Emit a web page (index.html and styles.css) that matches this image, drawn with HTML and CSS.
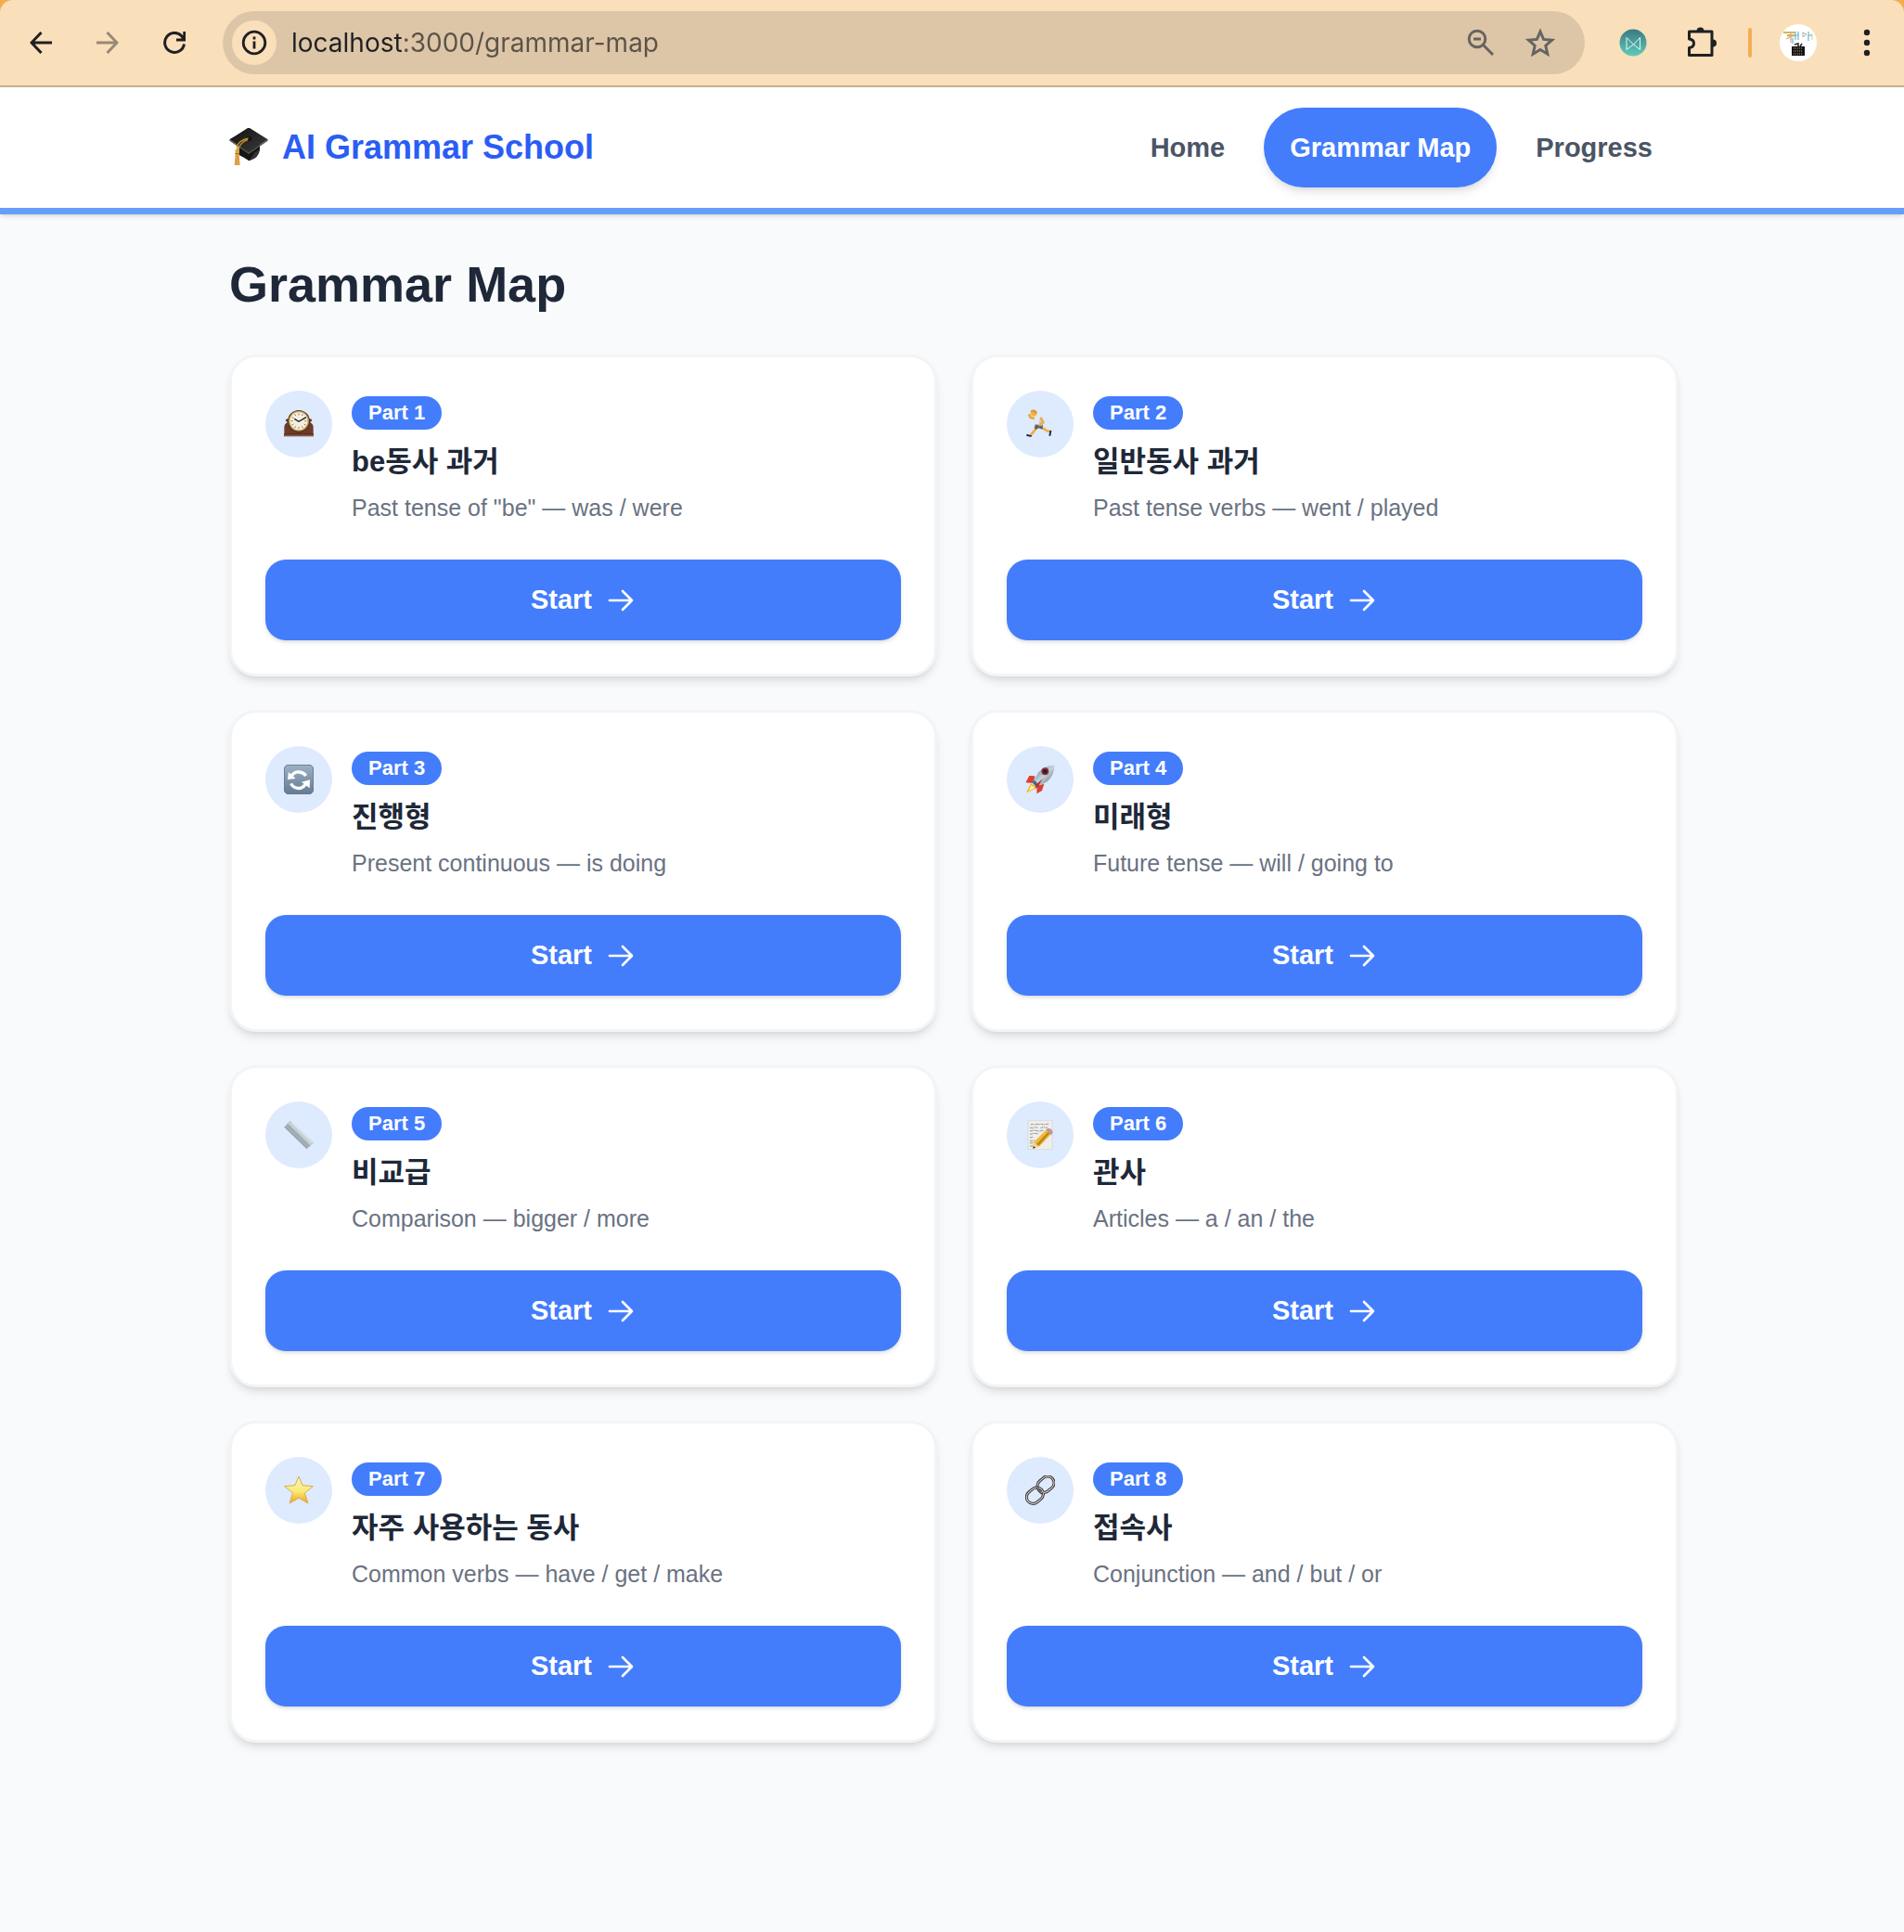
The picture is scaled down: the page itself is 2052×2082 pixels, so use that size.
FILE: index.html
```html
<!DOCTYPE html>
<html lang="ko">
<head>
    <meta charset="UTF-8">
    <meta name="viewport" content="width=device-width, initial-scale=1.0">
    <title>AI Grammar School</title>
    <link rel="stylesheet" href="styles.css">
</head>
<body>
    <svg class="defs" aria-hidden="true">
        <symbol id="arrow" viewBox="0 0 24 24">
            <path d="M13.5 4.5L21 12l-7.5 7.5M21 12H3" fill="none" stroke="currentColor" stroke-width="2" stroke-linecap="round" stroke-linejoin="round"/>
        </symbol>
    </svg>

    <!-- Browser toolbar -->
    <div class="browser">
        <div class="toolbar">
            <button class="tool-btn" aria-label="Back">
                <svg width="24" height="24" viewBox="0 0 24 24" fill="none" stroke="#1f2023" stroke-width="3"><path d="M12.5 1L2 12l10.500 11M2 12h22"/></svg>
            </button>
            <button class="tool-btn" aria-label="Forward">
                <svg width="24" height="24" viewBox="0 0 24 24" fill="none" stroke="#988876" stroke-width="3"><path d="M11.5 1L22 12 11.5 23M22 12H0"/></svg>
            </button>
            <button class="tool-btn" aria-label="Reload">
                <svg width="24" height="24" viewBox="0 0 24 24" fill="none" stroke="#1f2023" stroke-width="3"><path d="M22.5 13.5A10.5 10.5 0 1 1 20 5l2 3.5M22.8 0v9H14"/></svg>
            </button>
            <div class="omnibox">
                <button class="site-info" aria-label="Site information">
                    <svg width="28" height="28" viewBox="0 0 28 28" fill="none" stroke="#1f2023" stroke-width="2.8"><circle cx="14" cy="14" r="11.8"/><path d="M14 12.5v8M14 7.500v3"/></svg>
                </button>
                <input class="url" type="text" value="localhost:3000/grammar-map" aria-label="Address">
                <button class="tool-btn" aria-label="Zoom">
                    <svg width="30" height="30" viewBox="0 0 30 30" fill="none" stroke="#666462" stroke-width="3"><circle cx="11" cy="11" r="8.8"/><path d="M7 11h8M17.500 17.500L28 28"/></svg>
                </button>
                <button class="tool-btn" aria-label="Bookmark">
                    <svg width="32" height="32" viewBox="0 0 32 32" fill="none" stroke="#666462" stroke-width="3"><path d="M16 4l3.600 8.400 9 .8-6.800 6 2 9L16 23.500 8.200 28.200l2-9-6.800-6 9-.8z"/></svg>
                </button>
            </div>
            <div class="tool-actions">
                <button class="tool-btn" aria-label="Extension">
                    <svg width="30" height="30" viewBox="0 0 30 30">
                        <defs><linearGradient id="teal" x2="0" y2="1"><stop offset="0" stop-color="#397983"/><stop offset="1" stop-color="#61ccba"/></linearGradient></defs>
                        <circle cx="15" cy="15" r="14.5" fill="url(#teal)"/>
                        <path d="M8 9.500v13l7.500-5.500 7 5.500v-13L15.500 17z" fill="none" stroke="#e5fbf5"/>
                    </svg>
                </button>
                <button class="tool-btn" aria-label="Extensions">
                    <svg width="34" height="34" viewBox="0 0 34 34">
                        <path d="M3.500 5h24.500v25.500H3.500v-8c3.500-.5 5-2 5-4.800s-1.500-4.200-5-4.700z" fill="none" stroke="#1f2023" stroke-width="3" stroke-linejoin="round"/>
                        <path d="M11.500 4.500a4 4 0 0 1 8 0zM29 13.500a4 4 0 0 1 0 8z" fill="#1f2023"/>
                    </svg>
                </button>
                <span class="divider"></span>
                <button class="tool-btn" aria-label="Profile">
                    <svg width="40" height="40" viewBox="0 0 40 40">
                        <circle cx="20" cy="20" r="20" fill="#fff"/>
                        <path d="M4 9h13M8 12h9" stroke="#d2b85b" stroke-width="2"/>
                        <path d="M8 13h9M12 10v7M7 16l5-2" stroke="#e39b72"/>
                        <path d="M17 8v9M20 8v9M14 15v6M17 12h4M31 8v10M31 12h4" stroke="#8fc6d8" stroke-width="1.600"/>
                        <path d="M25 9l4 2-4 3zM12 20v-4" fill="none" stroke="#aaa"/>
                        <path d="M35 10v7" stroke="#d7cb74"/>
                        <path d="M13 24h14v10H13z" fill="#17120f"/>
                        <path d="M15 26h10M15 29h10M15 32h10" stroke="#aaa" stroke-dasharray="1 1"/>
                        <path d="M16 22l4-1v3M22 24l2-3" fill="none" stroke="#222" stroke-width="1.500"/>
                    </svg>
                </button>
                <button class="tool-btn" aria-label="Menu">
                    <svg width="8" height="30" viewBox="0 0 8 30" fill="#1f2023"><circle cx="4" cy="4" r="3.200"/><circle cx="4" cy="15" r="3.200"/><circle cx="4" cy="26" r="3.200"/></svg>
                </button>
            </div>
        </div>
    </div>

    <header class="header">
        <div class="container header-inner">
            <a class="logo" href="#">
                <svg width="42" height="42" viewBox="0 3 126 126" aria-hidden="true">
                    <defs><linearGradient id="cap" x2="1" y2="1"><stop offset="0" stop-color="#111"/><stop offset="1" stop-color="#3c3c3c"/></linearGradient></defs>
                    <path d="M32 62v28q12 6 32 19 32-8 35-36V52z" fill="#151515"/>
                    <path d="M82 83l16-10q-2 22-33 35z" fill="#353535"/>
                    <path d="M63 1l62 39-62 42L1 40z" fill="url(#cap)"/>
                    <path d="M1 40l62 42 62-42v4L63 87 1 44z" fill="#555"/>
                    <ellipse cx="64" cy="37" rx="9" ry="7" fill="#111"/>
                    <path d="M62 36Q30 44 26 62v22M60 41Q32 50 29 80" fill="none" stroke="#c8902c" stroke-width="4"/>
                    <path d="M20 72h12v16l3 35H17l3-35z" fill="#dda044"/>
                    <path d="M19 86h14" stroke="#a76c20" stroke-width="3"/>
                </svg>
                <span>AI Grammar School</span>
            </a>
            <nav class="nav">
                <a href="#">Home</a>
                <a class="active" href="#">Grammar Map</a>
                <a href="#">Progress</a>
            </nav>
        </div>
    </header>

    <main class="container main">
        <h1>Grammar Map</h1>
        <div class="grid">
            <article class="card">
                <div class="card-head">
                    <div class="icon">
                        <svg viewBox="0 0 96 96">
                            <path d="M6 38q-2-7 8-7h68q10 0 8 7l-6 4q11 6 11 16v26H1V58q0-10 11-16z" fill="#6d3c2c"/>
                            <path d="M0 81h96v7H0z" fill="#8b5743"/><path d="M0 79h96v3H0z" fill="#4b241b"/>
                            <circle cx="48" cy="39" r="36" fill="#4d2d1d"/><circle cx="48" cy="38" r="33" fill="#c09a4b"/><circle cx="48" cy="38" r="29" fill="#f3eee0"/>
                            <path d="M48 13v6M48 57v6M23 38h6M67 38h6M35 16l3 5M58 55l3 5M26 26l5 3M26 51l5-3M70 51l-5-3M35 60l3-5M61 16l-3 5" stroke="#827b6d" stroke-width="3"/>
                            <path d="M34 31l14 9 24-14" fill="none" stroke="#211b17" stroke-width="4"/>
                        </svg>
                    </div>
                    <div class="info">
                        <span class="badge">Part 1</span>
                        <h2>be동사 과거</h2>
                        <p>Past tense of "be" — was / were</p>
                    </div>
                </div>
                <button class="start">Start <svg><use href="#arrow"/></svg></button>
            </article>

            <article class="card">
                <div class="card-head">
                    <div class="icon">
                        <svg viewBox="0 0 96 96">
                            <path d="M31 30L17 27l-4-8" fill="none" stroke="#eba83b" stroke-width="8" stroke-linecap="round"/>
                            <path d="M40 52L31 68 17 84M51 58l20 12 12 2" fill="none" stroke="#efac43" stroke-width="8" stroke-linejoin="round"/>
                            <path d="M5 80l16 5-2 5-16-4zM79 69h6l-3 17h-6z" fill="#29264d"/>
                            <path d="M33 47l24 3-2 15-12-4-8 5-6-5z" fill="#626168"/>
                            <path d="M29 23l12-3 15 9-2 24-23-4z" fill="#e6e9ee"/><path d="M48 24l8 5-3 24-9-2z" fill="#c2c8d0"/>
                            <path d="M51 29l8 14-13 8" fill="none" stroke="#efac43" stroke-width="7" stroke-linecap="round" stroke-linejoin="round"/>
                            <circle cx="27" cy="13" r="10" fill="#f1b346"/><path d="M16 8q3-8 13-6 11 2 8 13l-5 1-4-7z" fill="#d59d30"/>
                        </svg>
                    </div>
                    <div class="info">
                        <span class="badge">Part 2</span>
                        <h2>일반동사 과거</h2>
                        <p>Past tense verbs — went / played</p>
                    </div>
                </div>
                <button class="start">Start <svg><use href="#arrow"/></svg></button>
            </article>

            <article class="card">
                <div class="card-head">
                    <div class="icon">
                        <svg viewBox="0 0 96 96">
                            <defs><linearGradient id="tile" x2="0" y2="1"><stop offset="0" stop-color="#9eb2c5"/><stop offset="1" stop-color="#647b94"/></linearGradient></defs>
                            <rect x="1" y="1" width="94" height="94" rx="14" fill="url(#tile)" stroke="#60758a" stroke-width="3"/>
                            <path d="M23 39q10-17 27-15 14 1 21 12M73 57Q63 79 44 76q-15-2-21-15" fill="none" stroke="#fff" stroke-width="10"/>
                            <path d="M15 24l-3 24 26-3zM83 76l1-27-27 7z" fill="#fff"/>
                        </svg>
                    </div>
                    <div class="info">
                        <span class="badge">Part 3</span>
                        <h2>진행형</h2>
                        <p>Present continuous — is doing</p>
                    </div>
                </div>
                <button class="start">Start <svg><use href="#arrow"/></svg></button>
            </article>

            <article class="card">
                <div class="card-head">
                    <div class="icon">
                        <svg viewBox="0 0 96 96">
                            <defs><linearGradient id="hull" x2="1" y2="1"><stop offset="0" stop-color="#3f6d9c"/><stop offset=".5" stop-color="#c3d3de"/><stop offset="1" stop-color="#555b63"/></linearGradient></defs>
                            <path d="M18 61L3 91l37-16z" fill="#efb42a"/><path d="M19 67l-8 18 21-10z" fill="#fff39b"/>
                            <path d="M31 37L13 36 1 58l26 2zM61 62L54 84 37 94l1-26z" fill="#db3f2d"/>
                            <path d="M94 2Q66 1 43 24L22 59l15 14 35-19Q95 31 94 2z" fill="url(#hull)"/>
                            <path d="M22 57l8-6 17 17-10 6z" fill="#426887"/>
                            <circle cx="64" cy="22" r="12" fill="#9d2928"/><circle cx="64" cy="22" r="7" fill="#162737"/>
                            <path d="M56 46L36 64l-4 14 11-10z" fill="#c92b27"/>
                        </svg>
                    </div>
                    <div class="info">
                        <span class="badge">Part 4</span>
                        <h2>미래형</h2>
                        <p>Future tense — will / going to</p>
                    </div>
                </div>
                <button class="start">Start <svg><use href="#arrow"/></svg></button>
            </article>

            <article class="card">
                <div class="card-head">
                    <div class="icon">
                        <svg viewBox="0 0 96 96">
                            <path d="M20 2L1 23l73 71 21-21z" fill="#a2adb6"/>
                            <path d="M20 2l-9 10 74 72 10-11z" fill="#c4ced5"/>
                            <path d="M11 12l74 72" stroke="#89949d" stroke-width="2"/>
                            <path d="M3 22l72 71" stroke="#747f88" stroke-width="3" stroke-dasharray="2 3"/>
                            <path d="M24 7l67 66" stroke="#dce4e9" stroke-width="4"/>
                        </svg>
                    </div>
                    <div class="info">
                        <span class="badge">Part 5</span>
                        <h2>비교급</h2>
                        <p>Comparison — bigger / more</p>
                    </div>
                </div>
                <button class="start">Start <svg><use href="#arrow"/></svg></button>
            </article>

            <article class="card">
                <div class="card-head">
                    <div class="icon">
                        <svg viewBox="0 0 96 96">
                            <path d="M9 1h78v94H9z" fill="#eeeeeb" stroke="#d2d2ce" stroke-width="2"/>
                            <path d="M17 15l7-2 5 2 7-2 6 1 9-1 8 2 18-3M15 25l10 1 7-3 10 2M49 26l9-3 14 2M15 36l14-3 15 3 16-3M15 46l16-3 12 2M15 57l11-2M15 68l18-2M15 75l14-2M15 85l10-2" fill="none" stroke="#666" stroke-width="2" stroke-dasharray="9 2 4 2"/>
                            <path d="M27 72l-2 20 21-7 38-40-15-15z" fill="#efbd35"/><path d="M36 78l38-40 5 5-37 42z" fill="#c38321"/>
                            <path d="M27 72l-2 20 20-6z" fill="#ecd4a2"/><path d="M26 84l-1 8 8-3z" fill="#292622"/>
                            <path d="M67 32l5-5 16 16-5 5z" fill="#9da7ac"/><path d="M71 28q10-3 15 5t1 11z" fill="#e7818b"/>
                        </svg>
                    </div>
                    <div class="info">
                        <span class="badge">Part 6</span>
                        <h2>관사</h2>
                        <p>Articles — a / an / the</p>
                    </div>
                </div>
                <button class="start">Start <svg><use href="#arrow"/></svg></button>
            </article>

            <article class="card">
                <div class="card-head">
                    <div class="icon">
                        <svg viewBox="0 0 96 96">
                            <defs><linearGradient id="gold" x2="0" y2="1"><stop offset="0" stop-color="#fff5bd"/><stop offset=".55" stop-color="#fbec75"/><stop offset="1" stop-color="#eba31d"/></linearGradient></defs>
                            <path d="M48 3l12 29 34 3-27 22 11 33-30-17-30 17 11-33L2 35l34-3z" fill="url(#gold)" stroke="#dcab50" stroke-width="3" stroke-linejoin="round"/>
                        </svg>
                    </div>
                    <div class="info">
                        <span class="badge">Part 7</span>
                        <h2>자주 사용하는 동사</h2>
                        <p>Common verbs — have / get / make</p>
                    </div>
                </div>
                <button class="start">Start <svg><use href="#arrow"/></svg></button>
            </article>

            <article class="card">
                <div class="card-head">
                    <div class="icon">
                        <svg viewBox="0 0 96 96" fill="none">
                            <g stroke="#3b3030" stroke-width="9"><rect x="37" y="8" width="58" height="42" rx="21" transform="rotate(-40 66 29)"/><rect x="2" y="44" width="58" height="42" rx="21" transform="rotate(-40 31 65)"/></g>
                            <g stroke="#d9dedf" stroke-width="3"><rect x="37" y="8" width="58" height="42" rx="21" transform="rotate(-40 66 29)"/><rect x="2" y="44" width="58" height="42" rx="21" transform="rotate(-40 31 65)"/></g>
                            <path d="M38 34q4 20 19 25" stroke="#3b3030" stroke-width="7"/><path d="M38 34q4 18 17 23" stroke="#a6a6a7" stroke-width="3"/>
                        </svg>
                    </div>
                    <div class="info">
                        <span class="badge">Part 8</span>
                        <h2>접속사</h2>
                        <p>Conjunction — and / but / or</p>
                    </div>
                </div>
                <button class="start">Start <svg><use href="#arrow"/></svg></button>
            </article>
        </div>
    </main>
</body>
</html>
```

FILE: styles.css
```css
* {
    box-sizing: border-box;
}
body {
    margin: 0;
    font-family: "Liberation Sans", "Noto Sans CJK KR", sans-serif;
    background-color: #f9fafc;
    color: #1e2838;
}
h1, h2, p {
    margin: 0;
}
a {
    text-decoration: none;
}
button {
    border: none;
    padding: 0;
    font-family: inherit;
    cursor: pointer;
}
.defs {
    display: none;
}

/* browser toolbar */
.browser {
    background-color: #f4ac50;
}
.toolbar {
    display: flex;
    align-items: center;
    gap: 24px;
    padding: 12px 16px 12px 20px;
    background-color: #fadfbb;
    border-bottom: 2px solid #c8b195;
    border-radius: 14px 14px 0 0;
}
.tool-btn, .site-info {
    display: flex;
    align-items: center;
    justify-content: center;
    flex-shrink: 0;
    width: 48px;
    height: 48px;
    background: none;
}
.omnibox {
    display: flex;
    align-items: center;
    flex: 1;
    gap: 16px;
    height: 68px;
    margin-left: 4px;
    padding: 0 24px 0 10px;
    border-radius: 34px;
    background-color: #ddc6a7;
}
.site-info {
    border-radius: 50%;
    background-color: #fadfbb;
}
.url {
    flex: 1;
    min-width: 0;
    height: 48px;
    padding: 0;
    border: none;
    outline: none;
    font-family: Inter, sans-serif;
    font-size: 28px;
    color: transparent;
    background: linear-gradient(to right, #1f2023 121px, #5b5248 121px);
    background-clip: text;
    -webkit-background-clip: text;
    caret-color: #1f2023;
}
.tool-actions {
    display: flex;
    align-items: center;
    gap: 26px;
    margin-left: 4px;
}
.divider {
    width: 4px;
    height: 32px;
    border-radius: 2px;
    background-color: #f4ae54;
}

/* site header */
.container {
    max-width: 1566px;
    margin: 0 auto;
    padding-left: 4px;
}
.header {
    background-color: #fff;
    border-bottom: 7px solid #659ffb;
    box-shadow: 0 2px 5px rgba(0,0,0,0.1), 0 2px 4px -2px rgba(0,0,0,0.1);
}
.header-inner {
    display: flex;
    align-items: center;
    justify-content: space-between;
    height: 130px;
}
.logo {
    display: flex;
    align-items: center;
    gap: 15px;
    font-size: 36px;
    font-weight: bold;
    color: #2b5df5;
}
.nav {
    display: flex;
    gap: 14px;
}
.nav a {
    padding: 0 28px;
    border-radius: 43px;
    font-size: 29px;
    font-weight: bold;
    line-height: 86px;
    color: #4a5565;
}
.nav .active {
    color: #fff;
    background-color: #437dfc;
    box-shadow: 0 7px 11px -2px rgba(0,0,0,0.1), 0 4px 7px -4px rgba(0,0,0,0.1);
}

/* lesson cards */
.main {
    padding-top: 43px;
    padding-bottom: 43px;
}
h1 {
    margin-bottom: 43px;
    font-size: 54px;
    line-height: 65px;
}
.grid {
    display: grid;
    grid-template-columns: 1fr 1fr;
    gap: 36px;
}
.card {
    padding: 36px;
    border: 3px solid #f3f4f6;
    border-radius: 29px;
    background-color: #fff;
    box-shadow: 0 7px 11px -2px rgba(0,0,0,0.1), 0 4px 7px -4px rgba(0,0,0,0.1);
}
.card-head {
    display: flex;
    align-items: flex-start;
    gap: 21px;
    margin-bottom: 38px;
}
.icon {
    display: flex;
    align-items: center;
    justify-content: center;
    width: 72px;
    height: 72px;
    border-radius: 50%;
    background-color: #deeafe;
}
.icon svg {
    width: 32px;
    height: 32px;
}
.info {
    display: flex;
    flex-direction: column;
    align-items: flex-start;
    padding-top: 6px;
}
.badge {
    padding: 0 18px;
    border-radius: 18px;
    font-size: 22px;
    font-weight: bold;
    line-height: 36px;
    color: #fff;
    background-color: #437dfc;
}
.info h2 {
    margin-top: 15px;
    font-size: 31px;
    line-height: 40px;
}
.info p {
    margin-top: 11px;
    font-size: 25px;
    line-height: 36px;
    color: #6a7282;
}
.start {
    display: flex;
    align-items: center;
    justify-content: center;
    gap: 15px;
    width: 100%;
    height: 87px;
    border-radius: 22px;
    font-size: 29px;
    font-weight: bold;
    color: #fff;
    background-color: #437dfc;
    box-shadow: 0 2px 5px rgba(0,0,0,0.1), 0 2px 4px -2px rgba(0,0,0,0.1);
}
.start svg {
    width: 32px;
    height: 32px;
}
```
